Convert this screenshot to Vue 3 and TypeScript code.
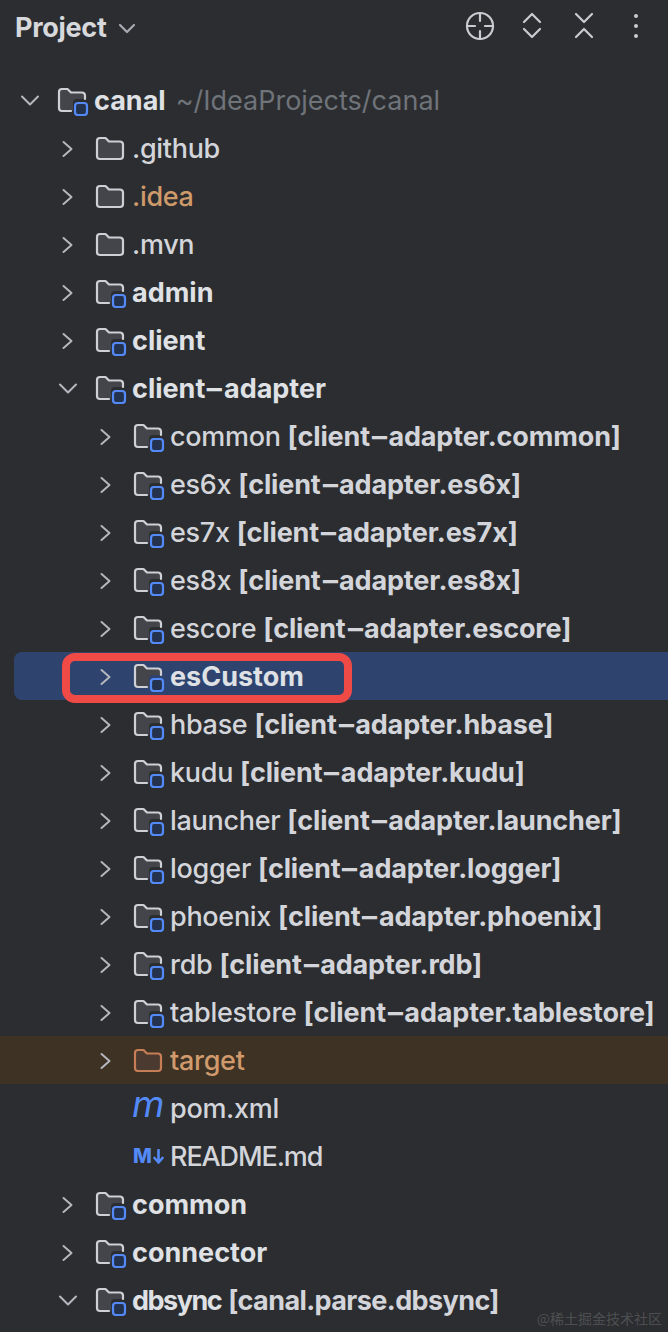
<template>
  <div class="panel">
    <header class="toolbar">
      <span class="title">Project</span>
      <svg class="title-caret" width="18" height="12" viewBox="0 0 18 12">
        <path d="M2 3l7 7 7-7" />
      </svg>
      <div class="actions">
        <span class="action">
          <svg width="32" height="32" viewBox="0 0 32 32">
            <circle cx="16" cy="16" r="13" />
            <path d="M16 3v8M16 21v8M3 16h8M21 16h8" />
          </svg>
        </span>
        <span class="action">
          <svg width="20" height="32" viewBox="0 0 20 32">
            <path d="M2 12l8-8 8 8M2 19l8 8 8-8" />
          </svg>
        </span>
        <span class="action">
          <svg width="20" height="32" viewBox="0 0 20 32">
            <path d="M2 4l8 8 8-8M2 27l8-8 8 8" />
          </svg>
        </span>
        <span class="action">
          <svg class="dots" width="6" height="32" viewBox="0 0 6 32">
            <circle cx="3" cy="6" r="2" />
            <circle cx="3" cy="16" r="2" />
            <circle cx="3" cy="26" r="2" />
          </svg>
        </span>
      </div>
    </header>

    <ul class="tree">
      <li
        v-for="row in rows"
        :key="row.name + row.depth"
        class="row"
        :class="[`depth-${row.depth}`, row.state]"
      >
        <span class="chevron">
          <svg v-if="row.arrow === 'open'" width="20" height="20" viewBox="0 0 20 20">
            <path d="M2 6.5l8 8 8-8" />
          </svg>
          <svg v-else-if="row.arrow === 'closed'" width="20" height="20" viewBox="0 0 20 20">
            <path d="M5.5 4l8 7-8 7" />
          </svg>
        </span>

        <span class="icon">
          <svg v-if="row.icon === 'folder'" width="30" height="30" viewBox="0 0 30 30">
            <path class="folder" d="M2 8a3 3 0 0 1 3-3h5.5L14 8.5H25a3 3 0 0 1 3 3V23a3 3 0 0 1-3 3H5a3 3 0 0 1-3-3z" />
          </svg>
          <svg v-else-if="row.icon === 'module'" width="32" height="32" viewBox="0 0 32 32">
            <path class="folder-fill" d="M2 8a3 3 0 0 1 3-3h5.5L14 8.5H25a3 3 0 0 1 3 3V15h-8a4 4 0 0 0-4 4v8H5a3 3 0 0 1-3-3z" />
            <path class="folder-line" d="M14 27H5a3 3 0 0 1-3-3V8a3 3 0 0 1 3-3h5.5L14 8.5H25a3 3 0 0 1 3 3V15" />
            <rect class="badge" x="18" y="19" width="12" height="12" rx="3" />
          </svg>
          <span v-else-if="row.icon === 'maven'" class="maven">m</span>
          <span v-else-if="row.icon === 'markdown'" class="markdown">
            M
            <svg class="md-arrow" width="11" height="15" viewBox="0 0 11 15">
              <path d="M5.5 1v12M1.5 9l4 4.5 4-4.5" />
            </svg>
          </span>
        </span>

        <span class="label">
          <span class="name" :class="{ strong: row.strong }">
            <template v-for="(part, i) in row.name.split('-')" :key="i"><span v-if="i" class="hy">-</span>{{ part }}</template>
          </span>
          <span v-if="row.module" class="module">[<template v-for="(part, i) in row.module.split('-')" :key="i"><span v-if="i" class="hy">-</span>{{ part }}</template>]</span>
          <span v-if="row.path" class="path">{{ row.path }}</span>
        </span>
      </li>
    </ul>

    <div class="marker"></div>
    <div class="watermark">@稀土掘金技术社区</div>
  </div>
</template>

<script setup lang="ts">
type Arrow = 'open' | 'closed' | 'none'
type Icon = 'folder' | 'module' | 'maven' | 'markdown'

interface Row {
  name: string
  depth: number
  arrow: Arrow
  icon: Icon
  strong?: boolean
  module?: string
  path?: string
  state?: string
}

const adapter = (name: string): Row => ({
  name,
  depth: 2,
  arrow: 'closed',
  icon: 'module',
  module: `client-adapter.${name}`,
})

const rows: Row[] = [
  { name: 'canal', depth: 0, arrow: 'open', icon: 'module', strong: true, path: '~/IdeaProjects/canal' },
  { name: '.github', depth: 1, arrow: 'closed', icon: 'folder' },
  { name: '.idea', depth: 1, arrow: 'closed', icon: 'folder', state: 'ignored' },
  { name: '.mvn', depth: 1, arrow: 'closed', icon: 'folder' },
  { name: 'admin', depth: 1, arrow: 'closed', icon: 'module', strong: true },
  { name: 'client', depth: 1, arrow: 'closed', icon: 'module', strong: true },
  { name: 'client-adapter', depth: 1, arrow: 'open', icon: 'module', strong: true },
  adapter('common'),
  adapter('es6x'),
  adapter('es7x'),
  adapter('es8x'),
  adapter('escore'),
  { name: 'esCustom', depth: 2, arrow: 'closed', icon: 'module', strong: true, state: 'selected' },
  adapter('hbase'),
  adapter('kudu'),
  adapter('launcher'),
  adapter('logger'),
  adapter('phoenix'),
  adapter('rdb'),
  adapter('tablestore'),
  { name: 'target', depth: 2, arrow: 'closed', icon: 'folder', state: 'excluded' },
  { name: 'pom.xml', depth: 2, arrow: 'none', icon: 'maven' },
  { name: 'README.md', depth: 2, arrow: 'none', icon: 'markdown', state: 'caps' },
  { name: 'common', depth: 1, arrow: 'closed', icon: 'module', strong: true },
  { name: 'connector', depth: 1, arrow: 'closed', icon: 'module', strong: true },
  { name: 'dbsync', depth: 1, arrow: 'open', icon: 'module', strong: true, module: 'canal.parse.dbsync', state: 'tight' },
]
</script>

<style>
html,
body {
  margin: 0;
  background: #2b2d30;
}
</style>

<style scoped>
.panel {
  position: relative;
  width: 668px;
  height: 1332px;
  overflow: hidden;
  background: #2b2d30;
  color: #d3d5da;
  font-family: Inter, "Noto Sans", sans-serif;
  font-size: 27px;
}

svg {
  display: block;
  fill: none;
  stroke: #c9ccd2;
  stroke-width: 2.2;
  stroke-linecap: round;
  stroke-linejoin: round;
}

/* toolbar */
.toolbar {
  display: flex;
  align-items: center;
  height: 54px;
  padding: 0 6px 0 15px;
  margin-bottom: 22px;
}
.title {
  font-size: 27px;
  font-weight: 700;
  letter-spacing: -0.3px;
  color: #d6d8dc;
}
.title-caret {
  margin-left: 12px;
  margin-top: 2px;
  stroke: #a8abb2;
}
.actions {
  display: flex;
  align-items: center;
  margin-left: auto;
  margin-top: -2px;
}
.action {
  display: flex;
  justify-content: center;
  width: 52px;
}
.dots {
  fill: #c9ccd2;
  stroke: none;
}

/* tree */
.tree {
  list-style: none;
  margin: 0;
  padding: 0;
}
.row {
  display: flex;
  align-items: center;
  height: 48px;
  white-space: nowrap;
}
.depth-0 { padding-left: 20px; }
.depth-1 { padding-left: 58px; }
.depth-2 { padding-left: 96px; }

.chevron {
  flex: none;
  width: 20px;
  height: 20px;
}
.chevron svg {
  stroke: #b4b7bd;
  stroke-width: 2;
}
.icon {
  flex: none;
  display: flex;
  align-items: center;
  width: 37px;
  height: 32px;
  margin-left: 17px;
}
.folder {
  fill: #43454a;
  stroke: #ced0d6;
}
.folder-fill {
  fill: #43454a;
  stroke: none;
}
.folder-line {
  stroke: #ced0d6;
}
.badge {
  fill: #25324d;
  stroke: #548af7;
}
.maven {
  font-style: italic;
  font-size: 37px;
  font-weight: 450;
  line-height: 32px;
  color: #548af7;
  margin-top: -9px;
  margin-left: -1px;
}
.markdown {
  display: flex;
  align-items: center;
  gap: 1px;
  font-size: 20px;
  font-weight: 800;
  color: #548af7;
}
.md-arrow {
  stroke: #548af7;
  stroke-width: 2.6;
}

.label {
  font-weight: 500;
}
.name {
  letter-spacing: -0.3px;
}
.name.strong,
.module {
  font-weight: 650;
  letter-spacing: 0;
}
.name.strong {
  color: #dfe1e5;
}
.module {
  margin-left: 7px;
  letter-spacing: -0.15px;
  color: #d3d5da;
}
.hy {
  display: inline-block;
  margin: 0 3px;
  transform: scaleX(1.7);
}
.path {
  margin-left: 10px;
  font-weight: 400;
  color: #6f737a;
}

/* row states */
.ignored .name {
  color: #cf9a6a;
}
.caps .name {
  letter-spacing: -1.1px;
}
.tight .name.strong {
  letter-spacing: -1.5px;
}
.tight .module {
  letter-spacing: -0.6px;
}
.selected {
  margin-left: 14px;
  padding-left: 82px;
  background: #2e436e;
  border-radius: 8px 0 0 8px;
}
.excluded {
  background: #3d3224;
}
.excluded .name {
  color: #d09a6c;
}
.excluded .folder {
  fill: #4a3a2f;
  stroke: #c77d55;
}

/* red annotation box drawn over the selected row */
.marker {
  position: absolute;
  left: 62px;
  top: 653px;
  width: 290px;
  height: 50px;
  box-sizing: border-box;
  border: 8px solid #ef4a45;
  border-radius: 13px;
}
.watermark {
  position: absolute;
  right: 6px;
  bottom: 4px;
  font-family: "Noto Sans CJK SC", sans-serif;
  font-size: 14px;
  color: rgba(255, 255, 255, 0.18);
}
</style>
